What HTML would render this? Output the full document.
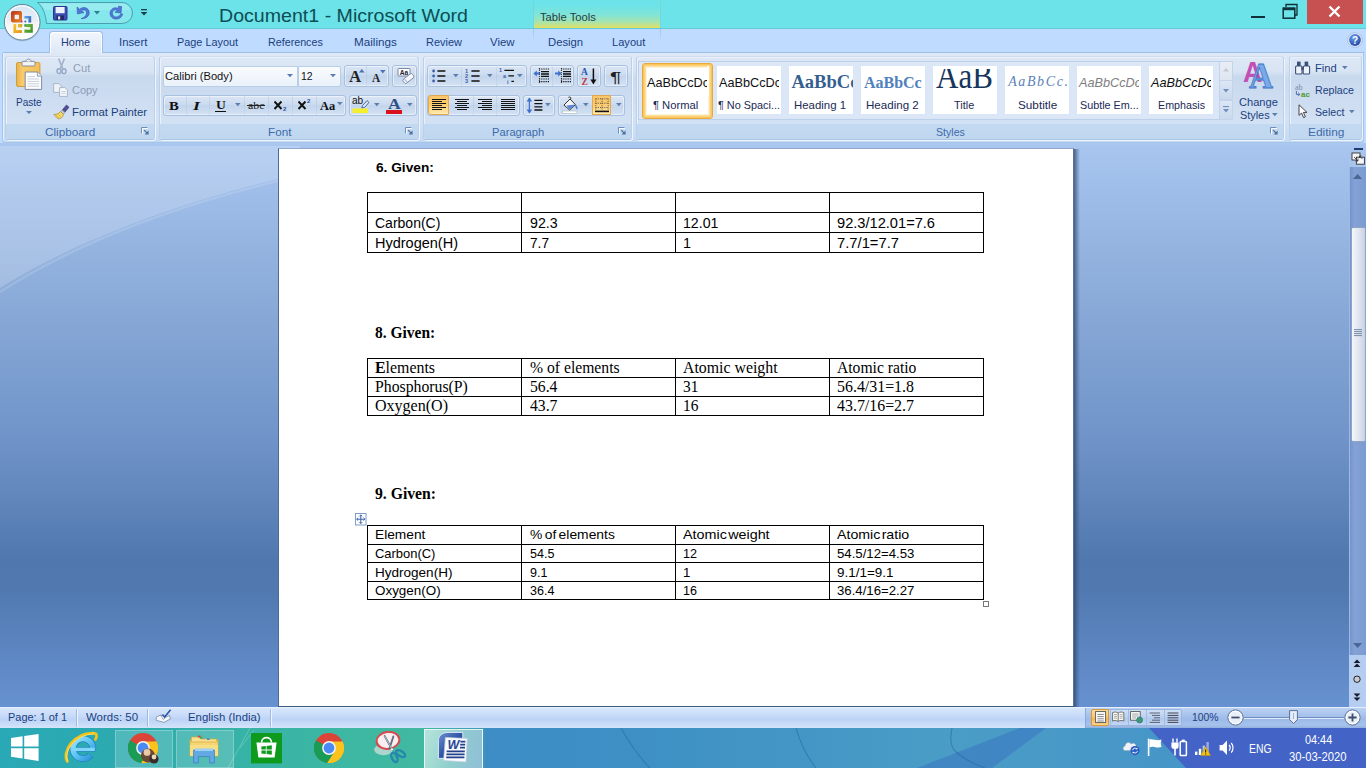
<!DOCTYPE html>
<html><head><meta charset='utf-8'><title>Document1 - Microsoft Word</title>
<style>
html,body{margin:0;padding:0}
body{width:1366px;height:768px;overflow:hidden;position:relative;background:#bfdbff;font-family:'Liberation Sans',sans-serif}
div,span.t,svg{position:absolute;box-sizing:border-box}
span.t{white-space:nowrap;transform-origin:0 50%;display:block}

</style></head>
<body>
<!-- title bar -->
<div style="left:0px;top:0px;width:1366px;height:29px;background:#6ce3e8;border-bottom:1px solid #62c9d6"></div>
<div style="left:533px;top:0px;width:128px;height:28px;background:linear-gradient(#6ce3e8 18%,#80e4d8 52%,#a6e4ae 78%,#cfe27c 93%,#e6de60 100%);border-left:1px solid #74d6dc;border-right:1px solid #74d6dc"></div>
<span class="t" style="left:540.3px;top:10.2px;font:normal normal 11px 'Liberation Sans',sans-serif;line-height:14px;color:#1e3e4a;transform:scaleX(1.0176);">Table Tools</span>
<span class="t" style="left:219.0px;top:3.7px;font:normal normal 18.2px 'Liberation Sans',sans-serif;line-height:24px;color:#0d4d55;transform:scaleX(1.0774);">Document1 - Microsoft Word</span>
<div style="left:1307px;top:0px;width:56px;height:23.5px;background:#c75050"></div>
<svg style="left:1328px;top:5px" width="13" height="13" viewBox="0 0 13 13"><path d="M1.5 1.5 L11.5 11.5 M11.5 1.5 L1.5 11.5" stroke="#fff" stroke-width="2.4" fill="none"/></svg>
<svg style="left:1282px;top:3px" width="17" height="17" viewBox="0 0 17 17"><path d="M4 4 V1.5 H15 V12 H13" stroke="#10303a" stroke-width="1.3" fill="none"/><rect x="1.2" y="5.2" width="11.6" height="10" fill="none" stroke="#10303a" stroke-width="1.5"/><rect x="1" y="4.6" width="12" height="2.6" fill="#10303a"/></svg>
<div style="left:1251px;top:16px;width:14px;height:2.4px;background:#10303a"></div>
<svg style="left:36px;top:0px" width="100" height="28" viewBox="0 0 100 28"><path d="M1.5 2.5 H86 A10.5 10.5 0 0 1 86 23.5 H10.5 C9.6 15 7.4 7.4 1.5 2.5 Z" fill="#86e7ec" stroke="#4c9fae" stroke-width="1"/><path d="M5 3.6 H86 A9.5 9.5 0 0 1 94.6 10 H9.4 Z" fill="#a8eef3" opacity=".55"/></svg>
<svg style="left:53px;top:6px" width="15" height="15" viewBox="0 0 15 15"><rect x=".5" y=".5" width="13.5" height="13.5" rx="1" fill="#3d4fb3" stroke="#2a3590"/><rect x="2.6" y="1" width="9" height="6.2" fill="#eef2ff"/><rect x="3.6" y="9.5" width="7.4" height="4.5" fill="#222a66"/><rect x="5" y="10.4" width="2.2" height="3" fill="#dfe4ff"/></svg>
<svg style="left:75px;top:5px" width="16" height="16" viewBox="0 0 16 16"><path d="M2 2 L2.5 9 L9 7.5 L6.4 6 C9 3.6 12.4 5.4 11.4 9 C10.8 11.4 8.6 13 6 13.6 C10.6 14 14.4 11.4 14.2 7.4 C14 3 8.6 0.8 4.6 4.2 Z" fill="#5078d6" stroke="#3558b4" stroke-width=".6"/></svg>
<svg style="left:94px;top:11px" width="7" height="5" viewBox="0 0 7 5"><path d="M0 0 H6 L3 3.4 Z" fill="#2d7e8e"/></svg>
<svg style="left:108px;top:5px" width="16" height="16" viewBox="0 0 16 16"><path d="M10.6 1.2 L13.6 1.6 L13 8 L7 7.2 L9.4 5.4 C6.6 3.6 3.6 6.4 4.6 9.4 C5.4 11.8 8 12.6 10.2 11.4 C12 10.6 12.6 9.4 12.8 8.6 L14.6 9 C14 12.4 10.6 14.6 7 14 C3.4 13.4 1.4 10.2 2.2 7 C3 3.6 7 1.6 10 3.4 Z" fill="#5078d6" stroke="#3558b4" stroke-width=".6"/></svg>
<svg style="left:140px;top:8px" width="9" height="9" viewBox="0 0 9 9"><rect x="1" y="1" width="6" height="1.3" fill="#1d3f50"/><path d="M0.6 4 H7.4 L4 7.6 Z" fill="#1d3f50"/></svg>
<!-- tab row -->
<div style="left:0px;top:29px;width:1366px;height:24px;background:#bfdbff"></div>
<div style="left:533px;top:29px;width:1px;height:12px;background:linear-gradient(#9fc4e8,#bfdbff)"></div>
<div style="left:660px;top:29px;width:1px;height:12px;background:linear-gradient(#9fc4e8,#bfdbff)"></div>
<div style="left:3px;top:52px;width:1361px;height:1px;background:#9fbee6"></div>
<div style="left:48.5px;top:30.5px;width:54px;height:25px;background:linear-gradient(#f2f6fc,#e3ecf8 60%,#dde8f6);border:1px solid #9ebde6;border-bottom:none;border-radius:4px 4px 0 0;box-shadow:inset 1px 1px 0 #fff,inset -1px 0 0 #fff"></div>
<span class="t" style="left:60.6px;top:35.0px;font:normal normal 11px 'Liberation Sans',sans-serif;line-height:14px;color:#1a3f80;transform:scaleX(0.9883);">Home</span>
<span class="t" style="left:118.5px;top:35.0px;font:normal normal 11px 'Liberation Sans',sans-serif;line-height:14px;color:#1a3f80;transform:scaleX(1.0287);">Insert</span>
<span class="t" style="left:177.4px;top:35.0px;font:normal normal 11px 'Liberation Sans',sans-serif;line-height:14px;color:#1a3f80;transform:scaleX(0.9875);">Page Layout</span>
<span class="t" style="left:268.4px;top:35.0px;font:normal normal 11px 'Liberation Sans',sans-serif;line-height:14px;color:#1a3f80;transform:scaleX(0.9742);">References</span>
<span class="t" style="left:353.5px;top:35.0px;font:normal normal 11px 'Liberation Sans',sans-serif;line-height:14px;color:#1a3f80;transform:scaleX(1.0608);">Mailings</span>
<span class="t" style="left:426.3px;top:35.0px;font:normal normal 11px 'Liberation Sans',sans-serif;line-height:14px;color:#1a3f80;transform:scaleX(0.9954);">Review</span>
<span class="t" style="left:490.3px;top:35.0px;font:normal normal 11px 'Liberation Sans',sans-serif;line-height:14px;color:#1a3f80;transform:scaleX(1.0405);">View</span>
<span class="t" style="left:547.6px;top:35.0px;font:normal normal 11px 'Liberation Sans',sans-serif;line-height:14px;color:#1a3f80;transform:scaleX(1.0251);">Design</span>
<span class="t" style="left:612.4px;top:35.0px;font:normal normal 11px 'Liberation Sans',sans-serif;line-height:14px;color:#1a3f80;transform:scaleX(1.0083);">Layout</span>
<svg style="left:1347px;top:32px" width="16" height="16" viewBox="0 0 16 16"><defs><radialGradient id="hg" cx=".4" cy=".3" r=".8"><stop offset="0" stop-color="#6aa0f0"/><stop offset="1" stop-color="#1c3f9c"/></radialGradient></defs><circle cx="8" cy="8" r="7.3" fill="#e8f0fc" stroke="#9db8e0" stroke-width=".8"/><circle cx="8" cy="8" r="5.9" fill="url(#hg)"/><text x="8" y="11.6" font-family="Liberation Sans,sans-serif" font-weight="bold" font-size="10" fill="#fff" text-anchor="middle">?</text></svg>
<svg style="left:2px;top:2px" width="42" height="42" viewBox="0 0 42 42"><defs><linearGradient id="ob" x1="0" y1="0" x2="0" y2="1"><stop offset="0" stop-color="#d4e6f6"/><stop offset=".45" stop-color="#e9eef6"/><stop offset=".55" stop-color="#f4f5f8"/><stop offset="1" stop-color="#ffffff"/></linearGradient>
<linearGradient id="o1" x1="0" y1="0" x2="1" y2="1"><stop offset="0" stop-color="#b8321a"/><stop offset="1" stop-color="#ef8a24"/></linearGradient>
<linearGradient id="o2" x1="0" y1="0" x2="1" y2="1"><stop offset="0" stop-color="#f6c83a"/><stop offset="1" stop-color="#e6920e"/></linearGradient>
<linearGradient id="o3" x1="0" y1="0" x2="1" y2="1"><stop offset="0" stop-color="#7cc04a"/><stop offset="1" stop-color="#3a8a22"/></linearGradient>
<linearGradient id="o4" x1="0" y1="0" x2="1" y2="1"><stop offset="0" stop-color="#6aaae6"/><stop offset="1" stop-color="#2a62b4"/></linearGradient></defs>
<circle cx="20.2" cy="20.8" r="18.6" fill="#7a8fa8" opacity=".35"/>
<circle cx="20.2" cy="20.2" r="17.8" fill="url(#ob)" stroke="#5f8894" stroke-width="1"/>
<circle cx="20.2" cy="20.2" r="16.4" fill="none" stroke="#fff" stroke-width="1.2" opacity=".75"/>
<rect x="9" y="9" width="11" height="11.6" rx="2" fill="url(#o1)"/><rect x="12.6" y="12.8" width="4.4" height="4.4" rx=".6" fill="#eef0f4"/>
<path d="M22.4 14 H29.2 V20.5 H26.4 V16.6 H22.4 Z" fill="url(#o4)"/>
<path d="M11.4 22 H14.2 V28 H19.9 V31 H11.4 Z M16 22 H19.9 V25.6 H16 Z" fill="url(#o2)"/><rect x="14.4" y="25.6" width="3.4" height="2.6" fill="#fbf6e4"/>
<path d="M22.4 22 H30.8 V30.8 H22.4 V27.6 H26 V25 H22.4 Z" fill="url(#o3)"/><rect x="25.4" y="25" width="3" height="2.8" fill="#e6f3d6"/>
<circle cx="19.6" cy="19.6" r="1" fill="#b0406a"/><circle cx="23.3" cy="19.6" r="1" fill="#3d6fc0"/><circle cx="19.6" cy="23.3" r="1" fill="#b9b92c"/><circle cx="23.3" cy="23.3" r="1" fill="#3f9a9a"/></svg>
<!-- ribbon -->
<div style="left:2px;top:53px;width:1362px;height:89.5px;background:linear-gradient(#dfe9f6 0,#d6e3f4 20%,#cbdaef 30%,#d3e2f5 75%,#c4daf3 100%);border:1px solid #a6c5ea;border-top:none;border-radius:0 0 4px 4px;box-shadow:0 1px 0 #afcbef, inset 1px 0 0 #e8f1fb"></div>
<div style="left:0px;top:143px;width:1366px;height:3px;background:linear-gradient(#aec9ee,#a7c5ef)"></div>
<div style="left:4.5px;top:55.5px;width:150.0px;height:84.5px;background:linear-gradient(#dde7f5 0,#d9e5f4 17%,#c8d9ee 24%,#cddcf0 50%,#d6e4f6 100%);border:1px solid #bdd0e9;border-top-color:#cfdcee;border-bottom-color:#aac4e4;border-radius:3px;box-shadow:1px 1px 0 #eef4fc, inset 1px 1px 0 #eaf1fa"></div>
<div style="left:5.5px;top:124px;width:148.0px;height:15px;background:linear-gradient(#c2d9f1,#c0d8ef);border-radius:0 0 2px 2px"></div>
<svg style="left:140.5px;top:126.5px" width="9" height="9" viewBox="0 0 9 9"><path d="M.5 6.4 V.5 H6.4" fill="none" stroke="#6f8db8" stroke-width="1"/><path d="M1.5 7 V1.5 H7" fill="none" stroke="#fff" stroke-width="1" opacity=".9"/><path d="M3.2 3.2 L6 6" stroke="#4f6f9e" stroke-width="1.2"/><path d="M7.6 3.6 V7.6 H3.6 Z" fill="#4f6f9e"/></svg>
<div style="left:158.5px;top:55.5px;width:260.5px;height:84.5px;background:linear-gradient(#dde7f5 0,#d9e5f4 17%,#c8d9ee 24%,#cddcf0 50%,#d6e4f6 100%);border:1px solid #bdd0e9;border-top-color:#cfdcee;border-bottom-color:#aac4e4;border-radius:3px;box-shadow:1px 1px 0 #eef4fc, inset 1px 1px 0 #eaf1fa"></div>
<div style="left:159.5px;top:124px;width:258.5px;height:15px;background:linear-gradient(#c2d9f1,#c0d8ef);border-radius:0 0 2px 2px"></div>
<svg style="left:405px;top:126.5px" width="9" height="9" viewBox="0 0 9 9"><path d="M.5 6.4 V.5 H6.4" fill="none" stroke="#6f8db8" stroke-width="1"/><path d="M1.5 7 V1.5 H7" fill="none" stroke="#fff" stroke-width="1" opacity=".9"/><path d="M3.2 3.2 L6 6" stroke="#4f6f9e" stroke-width="1.2"/><path d="M7.6 3.6 V7.6 H3.6 Z" fill="#4f6f9e"/></svg>
<div style="left:423px;top:55.5px;width:208.5px;height:84.5px;background:linear-gradient(#dde7f5 0,#d9e5f4 17%,#c8d9ee 24%,#cddcf0 50%,#d6e4f6 100%);border:1px solid #bdd0e9;border-top-color:#cfdcee;border-bottom-color:#aac4e4;border-radius:3px;box-shadow:1px 1px 0 #eef4fc, inset 1px 1px 0 #eaf1fa"></div>
<div style="left:424px;top:124px;width:206.5px;height:15px;background:linear-gradient(#c2d9f1,#c0d8ef);border-radius:0 0 2px 2px"></div>
<svg style="left:617.5px;top:126.5px" width="9" height="9" viewBox="0 0 9 9"><path d="M.5 6.4 V.5 H6.4" fill="none" stroke="#6f8db8" stroke-width="1"/><path d="M1.5 7 V1.5 H7" fill="none" stroke="#fff" stroke-width="1" opacity=".9"/><path d="M3.2 3.2 L6 6" stroke="#4f6f9e" stroke-width="1.2"/><path d="M7.6 3.6 V7.6 H3.6 Z" fill="#4f6f9e"/></svg>
<div style="left:635.5px;top:55.5px;width:648.5px;height:84.5px;background:linear-gradient(#dde7f5 0,#d9e5f4 17%,#c8d9ee 24%,#cddcf0 50%,#d6e4f6 100%);border:1px solid #bdd0e9;border-top-color:#cfdcee;border-bottom-color:#aac4e4;border-radius:3px;box-shadow:1px 1px 0 #eef4fc, inset 1px 1px 0 #eaf1fa"></div>
<div style="left:636.5px;top:124px;width:646.5px;height:15px;background:linear-gradient(#c2d9f1,#c0d8ef);border-radius:0 0 2px 2px"></div>
<svg style="left:1270px;top:126.5px" width="9" height="9" viewBox="0 0 9 9"><path d="M.5 6.4 V.5 H6.4" fill="none" stroke="#6f8db8" stroke-width="1"/><path d="M1.5 7 V1.5 H7" fill="none" stroke="#fff" stroke-width="1" opacity=".9"/><path d="M3.2 3.2 L6 6" stroke="#4f6f9e" stroke-width="1.2"/><path d="M7.6 3.6 V7.6 H3.6 Z" fill="#4f6f9e"/></svg>
<div style="left:1288.5px;top:55.5px;width:73.0px;height:84.5px;background:linear-gradient(#dde7f5 0,#d9e5f4 17%,#c8d9ee 24%,#cddcf0 50%,#d6e4f6 100%);border:1px solid #bdd0e9;border-top-color:#cfdcee;border-bottom-color:#aac4e4;border-radius:3px;box-shadow:1px 1px 0 #eef4fc, inset 1px 1px 0 #eaf1fa"></div>
<div style="left:1289.5px;top:124px;width:71.0px;height:15px;background:linear-gradient(#c2d9f1,#c0d8ef);border-radius:0 0 2px 2px"></div>
<span class="t" style="left:45.4px;top:124.7px;font:normal normal 11px 'Liberation Sans',sans-serif;line-height:14px;color:#3e6aaa;transform:scaleX(1.0662);">Clipboard</span>
<span class="t" style="left:268.2px;top:124.7px;font:normal normal 11px 'Liberation Sans',sans-serif;line-height:14px;color:#3e6aaa;transform:scaleX(1.0631);">Font</span>
<span class="t" style="left:492.4px;top:124.7px;font:normal normal 11px 'Liberation Sans',sans-serif;line-height:14px;color:#3e6aaa;transform:scaleX(1.0162);">Paragraph</span>
<span class="t" style="left:935.8px;top:124.7px;font:normal normal 11px 'Liberation Sans',sans-serif;line-height:14px;color:#3e6aaa;transform:scaleX(0.9615);">Styles</span>
<span class="t" style="left:1307.6px;top:124.7px;font:normal normal 11px 'Liberation Sans',sans-serif;line-height:14px;color:#3e6aaa;transform:scaleX(1.0822);">Editing</span>
<svg style="left:15px;top:58px" width="32" height="34" viewBox="0 0 32 34"><defs><linearGradient id="cbg" x1="0" y1="0" x2="1" y2="0"><stop offset="0" stop-color="#e9b24a"/><stop offset=".25" stop-color="#f8cc6c"/><stop offset="1" stop-color="#f3bf58"/></linearGradient></defs>
<rect x="1.5" y="4.5" width="23.4" height="24" rx="1.5" fill="url(#cbg)" stroke="#d19c3a"/>
<rect x="7" y="3.4" width="13" height="4.6" rx=".8" fill="#f1f3f7" stroke="#7f8792" stroke-width=".9"/><path d="M11 3.4 C11 .4 16 .4 16 3.4" fill="#f1f3f7" stroke="#7f8792" stroke-width=".9"/>
<path d="M10.2 14 H22.4 L26.6 18.2 V31.4 H10.2 Z" fill="#fdfdfe" stroke="#7e8da6"/><path d="M22.4 14 V18.2 H26.6" fill="#e4eaf3" stroke="#7e8da6" stroke-width=".8"/>
<path d="M12.6 18.6 H20 M12.6 21 H24.2 M12.6 23.4 H24.2 M12.6 25.8 H24.2 M12.6 28.2 H24.2" stroke="#c3cbd8" stroke-width=".9"/></svg>
<span class="t" style="left:16.0px;top:94.8px;font:normal normal 11px 'Liberation Sans',sans-serif;line-height:14px;color:#1a3f80;transform:scaleX(0.9137);">Paste</span>
<svg style="left:25.5px;top:111px" width="7" height="5" viewBox="0 0 7 5"><path d="M0 0 H6 L3 3 Z" fill="#5a7fae"/></svg>
<svg style="left:55.5px;top:58px" width="11" height="17" viewBox="0 0 11 17"><path d="M2.6 .6 L6.6 10.4 M8.4 .6 L4.4 10.4" stroke="#a3b1c8" stroke-width="1.5" fill="none"/><ellipse cx="3" cy="13.2" rx="2" ry="2.4" fill="none" stroke="#95a8c8" stroke-width="1.4"/><ellipse cx="8" cy="13.2" rx="2" ry="2.4" fill="none" stroke="#95a8c8" stroke-width="1.4"/></svg>
<span class="t" style="left:72.6px;top:60.8px;font:normal normal 11px 'Liberation Sans',sans-serif;line-height:14px;color:#8d9db5;transform:scaleX(1.0048);">Cut</span>
<svg style="left:53px;top:83px" width="16" height="14" viewBox="0 0 16 14"><path d="M.6 .6 H6 L8.4 3 V9.4 H.6 Z" fill="#eef2f8" stroke="#a3b1c6" stroke-width=".9"/><path d="M6.6 4.6 H12 L14.4 7 V13.4 H6.6 Z" fill="#f6f8fb" stroke="#a3b1c6" stroke-width=".9"/><path d="M8.4 8.5 H12.6 M8.4 10.4 H12.6" stroke="#b9c4d4" stroke-width=".8"/></svg>
<span class="t" style="left:72.2px;top:83.0px;font:normal normal 11px 'Liberation Sans',sans-serif;line-height:14px;color:#8d9db5;transform:scaleX(0.9969);">Copy</span>
<svg style="left:53px;top:104px" width="17" height="16" viewBox="0 0 17 16"><path d="M13.4 1 L16 3.2 L11.6 8.6 L9 6.4 Z" fill="#4f4f96" stroke="#34346c" stroke-width=".6"/><path d="M9.2 6 L12 8.4 L10.4 10.2 L7.6 7.8 Z" fill="#c9cbd8" stroke="#7f8298" stroke-width=".5"/><path d="M7.4 7.6 L10.6 10.4 C10 13 7.6 15.2 5 14.8 L.8 10.4 C3.4 10.6 5.8 9.6 7.4 7.6 Z" fill="#f3d968" stroke="#a8882c" stroke-width=".7"/><path d="M3 11 L6 14 M5 10.2 L8 13" stroke="#c9a83c" stroke-width=".6"/></svg>
<span class="t" style="left:72.2px;top:105.2px;font:normal normal 11px 'Liberation Sans',sans-serif;line-height:14px;color:#1a3f80;transform:scaleX(1.0310);">Format Painter</span>
<div style="left:162.5px;top:66px;width:135.5px;height:20.5px;background:linear-gradient(#fafcfe,#eaf1fa);border:1px solid #b8cde8;border-radius:2px 0 0 2px"></div>
<div style="left:297.5px;top:66px;width:43.5px;height:20.5px;background:linear-gradient(#fafcfe,#eaf1fa);border:1px solid #b8cde8;border-radius:0 2px 2px 0"></div>
<span class="t" style="left:165.4px;top:68.8px;font:normal normal 11px 'Liberation Sans',sans-serif;line-height:14px;color:#111;transform:scaleX(1.0146);">Calibri (Body)</span>
<span class="t" style="left:301.4px;top:68.8px;font:normal normal 11px 'Liberation Sans',sans-serif;line-height:14px;color:#111;transform:scaleX(0.9481);">12</span>
<svg style="left:287px;top:74px" width="7" height="5" viewBox="0 0 7 5"><path d="M0 0 H6 L3 3.2 Z" fill="#5a7fae"/></svg>
<svg style="left:330px;top:74px" width="7" height="5" viewBox="0 0 7 5"><path d="M0 0 H6 L3 3.2 Z" fill="#5a7fae"/></svg>
<div style="left:344px;top:65px;width:44.5px;height:21.5px;background:linear-gradient(#dbe6f5,#cbdbef 45%,#c3d5ec 50%,#d3e1f3);border:1px solid #a9c1e0;border-radius:3px;box-shadow:inset 0 0 0 1px rgba(255,255,255,.45);"></div>
<div style="left:392px;top:65px;width:24.5px;height:21.5px;background:linear-gradient(#dbe6f5,#cbdbef 45%,#c3d5ec 50%,#d3e1f3);border:1px solid #a9c1e0;border-radius:3px;box-shadow:inset 0 0 0 1px rgba(255,255,255,.45);"></div>
<div style="left:366px;top:66px;width:1px;height:19.5px;background:linear-gradient(#cbdaee,#b9cde8,#cbdaee)"></div>
<span class="t" style="left:348.6px;top:65.9px;font:normal bold 17px 'Liberation Serif',serif;line-height:22px;color:#222;transform:scaleX(0.9937);">A</span>
<svg style="left:358.5px;top:69px" width="6" height="4" viewBox="0 0 6 4"><path d="M0 3.4 L2.8 0 L5.6 3.4 Z" fill="#4d73b8"/></svg>
<span class="t" style="left:372.2px;top:70.2px;font:normal bold 12.5px 'Liberation Serif',serif;line-height:16px;color:#222;transform:scaleX(0.9084);">A</span>
<svg style="left:379.5px;top:69.5px" width="6" height="4" viewBox="0 0 6 4"><path d="M0 0 H5.6 L2.8 3.4 Z" fill="#4d73b8"/></svg>
<svg style="left:394.5px;top:66.5px" width="20" height="18" viewBox="0 0 20 18"><rect x="3" y="1.5" width="12" height="7.5" rx=".8" fill="#fdfdfe" stroke="#6f7f9c" stroke-width=".9"/><text x="9" y="7.8" font-family="Liberation Sans,sans-serif" font-size="6.6" font-weight="bold" fill="#1c2233" text-anchor="middle">Aa</text><rect x="7.6" y="9" width="11.6" height="5" rx="1.6" fill="#f6f8fc" stroke="#7b8aa6" stroke-width=".9" transform="rotate(-38 13.4 11.5)"/><path d="M9.6 12.2 L12 15" stroke="#b4bdcf" stroke-width="1.2"/></svg>
<div style="left:162.5px;top:94.5px;width:183.0px;height:21.0px;background:linear-gradient(#dbe6f5,#cbdbef 45%,#c3d5ec 50%,#d3e1f3);border:1px solid #a9c1e0;border-radius:3px;box-shadow:inset 0 0 0 1px rgba(255,255,255,.45);"></div>
<div style="left:349px;top:94.5px;width:67.5px;height:21.0px;background:linear-gradient(#dbe6f5,#cbdbef 45%,#c3d5ec 50%,#d3e1f3);border:1px solid #a9c1e0;border-radius:3px;box-shadow:inset 0 0 0 1px rgba(255,255,255,.45);"></div>
<div style="left:185.5px;top:95.5px;width:1px;height:19px;background:linear-gradient(#cbdaee,#b9cde8,#cbdaee)"></div>
<div style="left:208.5px;top:95.5px;width:1px;height:19px;background:linear-gradient(#cbdaee,#b9cde8,#cbdaee)"></div>
<div style="left:243.5px;top:95.5px;width:1px;height:19px;background:linear-gradient(#cbdaee,#b9cde8,#cbdaee)"></div>
<div style="left:267.5px;top:95.5px;width:1px;height:19px;background:linear-gradient(#cbdaee,#b9cde8,#cbdaee)"></div>
<div style="left:291.5px;top:95.5px;width:1px;height:19px;background:linear-gradient(#cbdaee,#b9cde8,#cbdaee)"></div>
<div style="left:315.5px;top:95.5px;width:1px;height:19px;background:linear-gradient(#cbdaee,#b9cde8,#cbdaee)"></div>
<span class="t" style="left:168.6px;top:96.8px;font:normal bold 13.5px 'Liberation Serif',serif;line-height:18px;color:#111;transform:scaleX(1.0884);">B</span>
<span class="t" style="left:193.0px;top:96.8px;font:italic bold 13.5px 'Liberation Serif',serif;line-height:18px;color:#111;transform:scaleX(1.3324);">I</span>
<span class="t" style="left:215.6px;top:97.4px;font:normal bold 12.5px 'Liberation Serif',serif;line-height:16px;color:#111;transform:scaleX(1.0856);">U</span>
<div style="left:215.4px;top:111.2px;width:10.2px;height:1.2px;background:#111"></div>
<svg style="left:234.5px;top:103px" width="7" height="5" viewBox="0 0 7 5"><path d="M0 0 H5.6 L2.8 3.2 Z" fill="#5a7fae"/></svg>
<span class="t" style="left:248.0px;top:99.1px;font:normal normal 10.5px 'Liberation Serif',serif;line-height:14px;color:#222;transform:scaleX(1.1255);">abc</span>
<div style="left:247.4px;top:105.4px;width:17.6px;height:1px;background:#222"></div>
<svg style="left:273px;top:99px" width="17" height="13" viewBox="0 0 17 13"><path d="M1.5 2.5 L8.5 10 M8.5 2.5 L1.5 10" stroke="#111" stroke-width="1.9" fill="none"/><text x="10" y="12.4" font-family="Liberation Sans,sans-serif" font-size="6" font-weight="bold" fill="#1f4da0">2</text></svg>
<svg style="left:297px;top:97px" width="17" height="15" viewBox="0 0 17 15"><path d="M1.5 4.5 L8.5 12 M8.5 4.5 L1.5 12" stroke="#111" stroke-width="1.9" fill="none"/><text x="10" y="6" font-family="Liberation Sans,sans-serif" font-size="6" font-weight="bold" fill="#1f4da0">2</text></svg>
<span class="t" style="left:319.8px;top:96.8px;font:normal bold 13.5px 'Liberation Serif',serif;line-height:18px;color:#111;transform:scaleX(0.9213);">Aa</span>
<svg style="left:336.5px;top:102px" width="7" height="5" viewBox="0 0 7 5"><path d="M0 0 H5.6 L2.8 3.2 Z" fill="#5a7fae"/></svg>
<svg style="left:352px;top:96px" width="20" height="19" viewBox="0 0 20 19"><text x="0" y="8.4" font-family="Liberation Sans,sans-serif" font-size="10" fill="#111">ab</text><path d="M10.5 9.6 L15 4.6 L17 6.4 L12.6 11.4 L9.8 12 Z" fill="#dfe6f3" stroke="#3b5a9a" stroke-width=".9"/><rect x=".5" y="12.5" width="15.5" height="4.6" fill="#f5ee2d"/></svg>
<svg style="left:373.5px;top:103px" width="7" height="5" viewBox="0 0 7 5"><path d="M0 0 H5.6 L2.8 3.2 Z" fill="#5a7fae"/></svg>
<span class="t" style="left:387.6px;top:94.3px;font:normal bold 15px 'Liberation Serif',serif;line-height:20px;color:#2f4f86;transform:scaleX(1.1816);">A</span>
<div style="left:386px;top:110px;width:16px;height:3.6px;background:#d8121c"></div>
<svg style="left:406.5px;top:103px" width="7" height="5" viewBox="0 0 7 5"><path d="M0 0 H5.6 L2.8 3.2 Z" fill="#5a7fae"/></svg>
<div style="left:427px;top:65px;width:99.5px;height:22px;background:linear-gradient(#dbe6f5,#cbdbef 45%,#c3d5ec 50%,#d3e1f3);border:1px solid #a9c1e0;border-radius:3px;box-shadow:inset 0 0 0 1px rgba(255,255,255,.45);"></div>
<div style="left:529.5px;top:65px;width:44.0px;height:22px;background:linear-gradient(#dbe6f5,#cbdbef 45%,#c3d5ec 50%,#d3e1f3);border:1px solid #a9c1e0;border-radius:3px;box-shadow:inset 0 0 0 1px rgba(255,255,255,.45);"></div>
<div style="left:577px;top:65px;width:23.5px;height:22px;background:linear-gradient(#dbe6f5,#cbdbef 45%,#c3d5ec 50%,#d3e1f3);border:1px solid #a9c1e0;border-radius:3px;box-shadow:inset 0 0 0 1px rgba(255,255,255,.45);"></div>
<div style="left:604px;top:65px;width:24px;height:22px;background:linear-gradient(#dbe6f5,#cbdbef 45%,#c3d5ec 50%,#d3e1f3);border:1px solid #a9c1e0;border-radius:3px;box-shadow:inset 0 0 0 1px rgba(255,255,255,.45);"></div>
<div style="left:461px;top:66.5px;width:1px;height:19.5px;background:linear-gradient(#cbdaee,#b9cde8,#cbdaee)"></div>
<div style="left:495.5px;top:66.5px;width:1px;height:19.5px;background:linear-gradient(#cbdaee,#b9cde8,#cbdaee)"></div>
<div style="left:551.5px;top:66.5px;width:1px;height:19.5px;background:linear-gradient(#cbdaee,#b9cde8,#cbdaee)"></div>
<svg style="left:431px;top:68px" width="20" height="16" viewBox="0 0 20 16"><circle cx="2.6" cy="3" r="1.4" fill="#3a5fae"/><circle cx="2.6" cy="8" r="1.4" fill="#3a5fae"/><circle cx="2.6" cy="13" r="1.4" fill="#3a5fae"/><path d="M6.4 3 H14.4 M6.4 8 H14.4 M6.4 13 H14.4" stroke="#111" stroke-width="1.3"/></svg>
<svg style="left:452.5px;top:74px" width="7" height="5" viewBox="0 0 7 5"><path d="M0 0 H5.6 L2.8 3.2 Z" fill="#5a7fae"/></svg>
<svg style="left:465px;top:67px" width="20" height="18" viewBox="0 0 20 18"><text x="0" y="5.6" font-family="Liberation Sans,sans-serif" font-size="5.6" font-weight="bold" fill="#3a5fae">1</text><text x="0" y="11" font-family="Liberation Sans,sans-serif" font-size="5.6" font-weight="bold" fill="#3a5fae">2</text><text x="0" y="16.4" font-family="Liberation Sans,sans-serif" font-size="5.6" font-weight="bold" fill="#3a5fae">3</text><path d="M6.4 4 H14.6 M6.4 9 H14.6 M6.4 14 H14.6" stroke="#111" stroke-width="1.3"/></svg>
<svg style="left:487px;top:74px" width="7" height="5" viewBox="0 0 7 5"><path d="M0 0 H5.6 L2.8 3.2 Z" fill="#5a7fae"/></svg>
<svg style="left:499px;top:67px" width="20" height="19" viewBox="0 0 20 19"><text x="0" y="5.4" font-family="Liberation Sans,sans-serif" font-size="5.4" font-weight="bold" fill="#3a5fae">1</text><text x="4" y="11" font-family="Liberation Sans,sans-serif" font-size="5.4" font-weight="bold" fill="#3a5fae">a</text><text x="8" y="17" font-family="Liberation Sans,sans-serif" font-size="5.4" font-weight="bold" fill="#3a5fae">i</text><path d="M5.4 3.4 H15 M9.4 8.8 H15 M12.4 14.4 H15" stroke="#111" stroke-width="1.3"/></svg>
<svg style="left:517px;top:74px" width="7" height="5" viewBox="0 0 7 5"><path d="M0 0 H5.6 L2.8 3.2 Z" fill="#5a7fae"/></svg>
<svg style="left:532.5px;top:68px" width="18" height="16" viewBox="0 0 18 16"><path d="M0.4 5.6 L3.8 2.6 V4.6 H7 V6.6 H3.8 V8.6 Z" fill="#3f6fd0"/><path d="M6 1 H16" stroke="#111" stroke-width="1.1" stroke-dasharray="1.2 1"/><path d="M8 3.6 H16 M8 6 H16 M8 8.4 H16" stroke="#111" stroke-width="1.4"/><path d="M6 11 H16 M6 13.6 H16" stroke="#111" stroke-width="1.1" stroke-dasharray="1.2 1"/><path d="M6.4 0 V15" stroke="#111" stroke-width=".8" stroke-dasharray="1 1"/></svg>
<svg style="left:554.5px;top:68px" width="18" height="16" viewBox="0 0 18 16"><path d="M6.6 5.6 L3.2 2.6 V4.6 H0 V6.6 H3.2 V8.6 Z" fill="#3f6fd0"/><path d="M6 1 H16" stroke="#111" stroke-width="1.1" stroke-dasharray="1.2 1"/><path d="M8 3.6 H16 M8 6 H16 M8 8.4 H16" stroke="#111" stroke-width="1.4"/><path d="M6 11 H16 M6 13.6 H16" stroke="#111" stroke-width="1.1" stroke-dasharray="1.2 1"/><path d="M6.4 0 V15" stroke="#111" stroke-width=".8" stroke-dasharray="1 1"/></svg>
<svg style="left:580px;top:66.5px" width="20" height="20" viewBox="0 0 20 20"><text x="1" y="8.4" font-family="Liberation Serif,serif" font-size="9.5" font-weight="bold" fill="#2a55b0">A</text><text x="1.4" y="17.6" font-family="Liberation Serif,serif" font-size="9.5" font-weight="bold" fill="#c23a46">Z</text><path d="M13.4 1.5 V14" stroke="#111" stroke-width="1.5"/><path d="M10.4 12.6 H16.4 L13.4 17.4 Z" fill="#111"/></svg>
<span class="t" style="left:609.6px;top:66.6px;font:normal normal 15.5px 'Liberation Sans',sans-serif;line-height:20px;color:#222;transform:scaleX(1.3693);">¶</span>
<div style="left:427px;top:94.5px;width:92.5px;height:21.0px;background:linear-gradient(#dbe6f5,#cbdbef 45%,#c3d5ec 50%,#d3e1f3);border:1px solid #a9c1e0;border-radius:3px;box-shadow:inset 0 0 0 1px rgba(255,255,255,.45);"></div>
<div style="left:523px;top:94.5px;width:31.5px;height:21.0px;background:linear-gradient(#dbe6f5,#cbdbef 45%,#c3d5ec 50%,#d3e1f3);border:1px solid #a9c1e0;border-radius:3px;box-shadow:inset 0 0 0 1px rgba(255,255,255,.45);"></div>
<div style="left:558px;top:94.5px;width:67px;height:21.0px;background:linear-gradient(#dbe6f5,#cbdbef 45%,#c3d5ec 50%,#d3e1f3);border:1px solid #a9c1e0;border-radius:3px;box-shadow:inset 0 0 0 1px rgba(255,255,255,.45);"></div>
<div style="left:427.5px;top:95px;width:21.5px;height:20px;background:linear-gradient(#f9c66c 0,#fbc869 40%,#fcd584 68%,#feebb2 100%);border:1px solid #e4a94e;border-radius:3px 0 0 3px"></div>
<div style="left:472.5px;top:95.5px;width:1px;height:19px;background:linear-gradient(#cbdaee,#b9cde8,#cbdaee)"></div>
<div style="left:495.5px;top:95.5px;width:1px;height:19px;background:linear-gradient(#cbdaee,#b9cde8,#cbdaee)"></div>
<div style="left:596.5px;top:95.5px;width:1px;height:19px;background:linear-gradient(#cbdaee,#b9cde8,#cbdaee)"></div>
<div style="left:610px;top:95.5px;width:1px;height:19px;background:linear-gradient(#cbdaee,#b9cde8,#cbdaee)"></div>
<svg style="left:432px;top:99px" width="16" height="13" viewBox="0 0 16 13"><rect x="0" y="0" width="14" height="1" fill="#141414" shape-rendering="crispEdges"/><rect x="0" y="2" width="10" height="1" fill="#141414" shape-rendering="crispEdges"/><rect x="0" y="4" width="14" height="1" fill="#141414" shape-rendering="crispEdges"/><rect x="0" y="6" width="10" height="1" fill="#141414" shape-rendering="crispEdges"/><rect x="0" y="8" width="14" height="1" fill="#141414" shape-rendering="crispEdges"/><rect x="0" y="10" width="10" height="1" fill="#141414" shape-rendering="crispEdges"/></svg>
<svg style="left:455px;top:99px" width="16" height="13" viewBox="0 0 16 13"><rect x="0" y="0" width="14" height="1" fill="#141414" shape-rendering="crispEdges"/><rect x="2" y="2" width="10" height="1" fill="#141414" shape-rendering="crispEdges"/><rect x="0" y="4" width="14" height="1" fill="#141414" shape-rendering="crispEdges"/><rect x="2" y="6" width="10" height="1" fill="#141414" shape-rendering="crispEdges"/><rect x="0" y="8" width="14" height="1" fill="#141414" shape-rendering="crispEdges"/><rect x="2" y="10" width="10" height="1" fill="#141414" shape-rendering="crispEdges"/></svg>
<svg style="left:478px;top:99px" width="16" height="13" viewBox="0 0 16 13"><rect x="0" y="0" width="14" height="1" fill="#141414" shape-rendering="crispEdges"/><rect x="4" y="2" width="10" height="1" fill="#141414" shape-rendering="crispEdges"/><rect x="0" y="4" width="14" height="1" fill="#141414" shape-rendering="crispEdges"/><rect x="4" y="6" width="10" height="1" fill="#141414" shape-rendering="crispEdges"/><rect x="0" y="8" width="14" height="1" fill="#141414" shape-rendering="crispEdges"/><rect x="4" y="10" width="10" height="1" fill="#141414" shape-rendering="crispEdges"/></svg>
<svg style="left:501px;top:99px" width="16" height="13" viewBox="0 0 16 13"><rect x="0" y="0" width="14" height="1" fill="#141414" shape-rendering="crispEdges"/><rect x="0" y="2" width="14" height="1" fill="#141414" shape-rendering="crispEdges"/><rect x="0" y="4" width="14" height="1" fill="#141414" shape-rendering="crispEdges"/><rect x="0" y="6" width="14" height="1" fill="#141414" shape-rendering="crispEdges"/><rect x="0" y="8" width="14" height="1" fill="#141414" shape-rendering="crispEdges"/><rect x="0" y="10" width="14" height="1" fill="#141414" shape-rendering="crispEdges"/></svg>
<svg style="left:526px;top:96.5px" width="20" height="18" viewBox="0 0 20 18"><path d="M3.4 1 V16" stroke="#3f6fd0" stroke-width="1.3"/><path d="M.6 4.4 L3.4 .6 L6.2 4.4 Z M.6 12.6 L3.4 16.4 L6.2 12.6 Z" fill="#3f6fd0"/><path d="M8.4 3.4 H16.4 M8.4 6.6 H16.4 M8.4 9.8 H16.4 M8.4 13 H16.4" stroke="#111" stroke-width="1.3"/></svg>
<svg style="left:545px;top:103px" width="7" height="5" viewBox="0 0 7 5"><path d="M0 0 H5.6 L2.8 3.2 Z" fill="#5a7fae"/></svg>
<svg style="left:561px;top:96px" width="18" height="18" viewBox="0 0 18 18"><path d="M7.4 1.4 C9 .2 10.6 1.6 9.6 3.4 L9.2 4.4" fill="none" stroke="#333" stroke-width="1"/><path d="M3 9 L9 3 L14.4 8.6 L8.6 14 Z" fill="#f4f6fa" stroke="#333" stroke-width="1"/><path d="M14.4 8.6 C16.4 10 16.8 12 16.2 13.6 C15 12.6 14 11 14.4 8.6 Z" fill="#3f6fd0"/><path d="M5.4 9.4 L14 8.6 L8.6 13.6 Z" fill="#5b87da"/><rect x="1.4" y="15" width="14.6" height="2.4" fill="#fff" stroke="#9aa" stroke-width=".5"/></svg>
<svg style="left:583px;top:103px" width="7" height="5" viewBox="0 0 7 5"><path d="M0 0 H5.6 L2.8 3.2 Z" fill="#5a7fae"/></svg>
<div style="left:592px;top:95px;width:19px;height:20px;background:linear-gradient(#f9c66c 0,#fbc869 40%,#fcd584 68%,#feebb2 100%);border:1px solid #e4a94e"></div>
<svg style="left:594.5px;top:98px" width="14" height="15" viewBox="0 0 14 15"><path d="M.6 .8 H13.4 M.6 5.2 H13.4 M.6 9.6 H13.4" stroke="#444" stroke-width=".9" stroke-dasharray="1 1.2"/><path d="M.8 .6 V12 M7 .6 V12 M13.2 .6 V12" stroke="#444" stroke-width=".9" stroke-dasharray="1 1.2"/><path d="M0 13.4 H14" stroke="#111" stroke-width="1.6"/></svg>
<svg style="left:615.5px;top:103px" width="7" height="5" viewBox="0 0 7 5"><path d="M0 0 H5.6 L2.8 3.2 Z" fill="#5a7fae"/></svg>
<div style="left:637.5px;top:60.5px;width:595.5px;height:59px;background:#dbe7f6;border:1px solid #bdd0ea;border-right:none"></div>
<div style="left:641.5px;top:62.5px;width:71px;height:56px;background:#fff;border:1px solid #e8a93c;border-radius:3px;box-shadow:inset 0 0 0 1.5px #fbc55c, inset 0 0 0 3px #fddf9c, inset 0 0 0 4px #fef3d8"></div>
<div style="left:717px;top:66px;width:64px;height:48px;background:#fff"></div>
<div style="left:789px;top:66px;width:64px;height:48px;background:#fff"></div>
<div style="left:861px;top:66px;width:64px;height:48px;background:#fff"></div>
<div style="left:933px;top:66px;width:64px;height:48px;background:#fff"></div>
<div style="left:1005px;top:66px;width:64px;height:48px;background:#fff"></div>
<div style="left:1077px;top:66px;width:64px;height:48px;background:#fff"></div>
<div style="left:1149px;top:66px;width:64px;height:48px;background:#fff"></div>
<div style="left:645px;top:66px;width:64px;height:48px;overflow:hidden"><span class="t" style="left:2.4px;top:7.7px;font:normal normal 13.4px 'Liberation Sans',sans-serif;line-height:17px;color:#111;transform:scaleX(0.9467);">AaBbCcDc</span><div style="left:61.6px;top:0px;width:2.4px;height:30px;background:#fff"></div><span class="t" style="left:8.4px;top:31.8px;font:normal normal 11px 'Liberation Sans',sans-serif;line-height:14px;color:#1a2a55;transform:scaleX(1.0177);">¶ Normal</span></div>
<div style="left:717px;top:66px;width:64px;height:48px;overflow:hidden"><span class="t" style="left:2.4px;top:7.7px;font:normal normal 13.4px 'Liberation Sans',sans-serif;line-height:17px;color:#111;transform:scaleX(0.9467);">AaBbCcDc</span><div style="left:61.6px;top:0px;width:2.4px;height:30px;background:#fff"></div><span class="t" style="left:0.6px;top:31.8px;font:normal normal 11px 'Liberation Sans',sans-serif;line-height:14px;color:#1a2a55;transform:scaleX(0.9878);">¶ No Spaci...</span></div>
<div style="left:789px;top:66px;width:64px;height:48px;overflow:hidden"><span class="t" style="left:2.4px;top:4.3px;font:normal bold 18.6px 'Liberation Serif',serif;line-height:24px;color:#365f91;">AaBbCc</span><span class="t" style="left:5.4px;top:31.8px;font:normal normal 11px 'Liberation Sans',sans-serif;line-height:14px;color:#1a2a55;transform:scaleX(1.0369);">Heading 1</span></div>
<div style="left:861px;top:66px;width:64px;height:48px;overflow:hidden"><span class="t" style="left:3.3px;top:5.6px;font:normal bold 16px 'Liberation Serif',serif;line-height:21px;color:#4f81bd;transform:scaleX(0.9986);">AaBbCc</span><span class="t" style="left:5.3px;top:31.8px;font:normal normal 11px 'Liberation Sans',sans-serif;line-height:14px;color:#1a2a55;transform:scaleX(1.0508);">Heading 2</span></div>
<div style="left:933px;top:66px;width:64px;height:48px;overflow:hidden"><span class="t" style="left:3.2px;top:-12.1px;font:normal normal 35px 'Liberation Serif',serif;line-height:46px;color:#17365d;transform:scaleX(0.8854);">AaB</span><div style="left:0px;top:0px;width:64px;height:2.5px;background:#fff"></div><span class="t" style="left:21.4px;top:31.8px;font:normal normal 11px 'Liberation Sans',sans-serif;line-height:14px;color:#1a2a55;transform:scaleX(0.9915);">Title</span></div>
<div style="left:1005px;top:66px;width:64px;height:48px;overflow:hidden"><span class="t" style="left:3.2px;top:7.3px;font:italic normal 14px 'Liberation Serif',serif;line-height:18px;color:#5b83b8;letter-spacing:1.6px;">AaBbCc.</span><span class="t" style="left:12.5px;top:31.8px;font:normal normal 11px 'Liberation Sans',sans-serif;line-height:14px;color:#1a2a55;transform:scaleX(1.0684);">Subtitle</span></div>
<div style="left:1077px;top:66px;width:64px;height:48px;overflow:hidden"><span class="t" style="left:2.4px;top:7.7px;font:italic normal 13.4px 'Liberation Sans',sans-serif;line-height:17px;color:#808080;transform:scaleX(0.9467);">AaBbCcDc</span><div style="left:61.6px;top:0px;width:2.4px;height:30px;background:#fff"></div><span class="t" style="left:2.6px;top:31.8px;font:normal normal 11px 'Liberation Sans',sans-serif;line-height:14px;color:#1a2a55;transform:scaleX(0.9814);">Subtle Em...</span></div>
<div style="left:1149px;top:66px;width:64px;height:48px;overflow:hidden"><span class="t" style="left:2.4px;top:7.7px;font:italic normal 13.4px 'Liberation Sans',sans-serif;line-height:17px;color:#111;transform:scaleX(0.9467);">AaBbCcDc</span><div style="left:61.6px;top:0px;width:2.4px;height:30px;background:#fff"></div><span class="t" style="left:8.6px;top:31.8px;font:normal normal 11px 'Liberation Sans',sans-serif;line-height:14px;color:#1a2a55;transform:scaleX(0.9731);">Emphasis</span></div>
<div style="left:1218.5px;top:60.5px;width:14px;height:20px;background:linear-gradient(#e9eef5,#dfe6f0);border:1px solid #c3d4ea"></div>
<div style="left:1218.5px;top:80px;width:14px;height:20px;background:linear-gradient(#dbe6f5,#cad9ee);border:1px solid #c3d4ea"></div>
<div style="left:1218.5px;top:99.5px;width:14px;height:20px;background:linear-gradient(#dbe6f5,#cad9ee);border:1px solid #c3d4ea"></div>
<svg style="left:1222.5px;top:68px" width="7" height="5" viewBox="0 0 7 5"><path d="M0 3.4 L3 0 L6 3.4 Z" fill="#c2c8d2"/></svg>
<svg style="left:1222.5px;top:88.5px" width="7" height="5" viewBox="0 0 7 5"><path d="M0 0 H6 L3 3.4 Z" fill="#6f8fbc"/></svg>
<svg style="left:1222.5px;top:105.5px" width="7" height="8" viewBox="0 0 7 8"><rect x="0" y="0" width="6" height="1.1" fill="#6f8fbc"/><path d="M0 3 H6 L3 6.4 Z" fill="#6f8fbc"/></svg>
<span class="t" style="left:1243.0px;top:53.4px;font:normal bold 29px 'Liberation Sans',sans-serif;line-height:38px;color:#c44fb4;transform:scaleX(0.9263);">A</span>
<span class="t" style="left:1249.0px;top:54.4px;font:normal bold 35px 'Liberation Serif',serif;line-height:46px;color:#78aaea;transform:scaleX(0.9495);-webkit-text-stroke:.8px #3f72c4;">A</span>
<span class="t" style="left:1238.6px;top:94.8px;font:normal normal 11px 'Liberation Sans',sans-serif;line-height:14px;color:#1a3f80;transform:scaleX(1.0069);">Change</span>
<span class="t" style="left:1240.0px;top:107.8px;font:normal normal 11px 'Liberation Sans',sans-serif;line-height:14px;color:#1a3f80;transform:scaleX(0.9882);">Styles</span>
<svg style="left:1271.5px;top:112.5px" width="7" height="5" viewBox="0 0 7 5"><path d="M0 0 H5.6 L2.8 3.2 Z" fill="#5a7fae"/></svg>
<svg style="left:1294.5px;top:60.5px" width="17" height="14" viewBox="0 0 17 14"><rect x="2" y=".6" width="3.6" height="5" fill="#3c4f7a"/><rect x="9.6" y=".6" width="3.6" height="5" fill="#3c4f7a"/><rect x=".6" y="5" width="6.4" height="8" rx="1" fill="#eef2fa" stroke="#3c4f7a" stroke-width="1.1"/><rect x="8.2" y="5" width="6.4" height="8" rx="1" fill="#eef2fa" stroke="#3c4f7a" stroke-width="1.1"/><rect x="6.4" y="6" width="2.4" height="3" fill="#3c4f7a"/></svg>
<span class="t" style="left:1314.6px;top:61.0px;font:normal normal 11px 'Liberation Sans',sans-serif;line-height:14px;color:#1a3f80;transform:scaleX(1.0188);">Find</span>
<svg style="left:1341.5px;top:65.5px" width="7" height="5" viewBox="0 0 7 5"><path d="M0 0 H5.6 L2.8 3.2 Z" fill="#5a7fae"/></svg>
<svg style="left:1295px;top:83px" width="17" height="15" viewBox="0 0 17 15"><text x="0" y="6.6" font-family="Liberation Serif,serif" font-size="8" fill="#7a8aa8">ab</text><text x="6" y="13.6" font-family="Liberation Sans,sans-serif" font-size="8" font-weight="bold" fill="#4d9a2a">ac</text><path d="M1.4 8 V11.4 H4.6 M3.2 9.8 L4.8 11.4 L3.2 13" fill="none" stroke="#4a6fb8" stroke-width="1"/></svg>
<span class="t" style="left:1314.6px;top:83.4px;font:normal normal 11px 'Liberation Sans',sans-serif;line-height:14px;color:#1a3f80;transform:scaleX(0.9663);">Replace</span>
<svg style="left:1298px;top:104px" width="11" height="15" viewBox="0 0 11 15"><path d="M1 .8 V11.4 L3.6 9 L5.6 13.6 L7.4 12.8 L5.4 8.4 H9 Z" fill="#fff" stroke="#333" stroke-width=".9"/></svg>
<span class="t" style="left:1314.6px;top:105.4px;font:normal normal 11px 'Liberation Sans',sans-serif;line-height:14px;color:#1a3f80;transform:scaleX(0.9617);">Select</span>
<svg style="left:1348.5px;top:110px" width="7" height="5" viewBox="0 0 7 5"><path d="M0 0 H5.6 L2.8 3.2 Z" fill="#5a7fae"/></svg>
<!-- document area -->
<div style="left:0px;top:146px;width:1366px;height:561px;background:linear-gradient(#a7c5ef 0,#8dadda 25%,#7094c9 52%,#5078ae 74%,#5179b0 79%,#6792d1 100%)"></div>
<svg style="left:0px;top:146px" width="300" height="160" viewBox="0 0 300 160"><path d="M0 0 H300 V28 C190 52 80 92 0 142 Z" fill="#fff" opacity=".2"/><path d="M300 30 C190 54 80 94 0 146" fill="none" stroke="#fff" stroke-width="2.5" opacity=".14"/></svg>
<div style="left:1073px;top:149px;width:7px;height:558px;background:linear-gradient(90deg,rgba(40,60,95,.85),rgba(50,75,115,.5) 45%,rgba(60,90,140,0))"></div>
<div style="left:278px;top:148px;width:796px;height:559px;background:#fff;border-left:1px solid #4f6a94;border-top:1px solid #93a9cc;border-right:1px solid #5a7198;border-bottom:1px solid #3d5a80"></div>
<span class="t" style="left:375.6px;top:158.9px;font:normal bold 13.4px 'Liberation Sans',sans-serif;line-height:17px;color:#000;transform:scaleX(1.0220);">6. Given:</span>
<span class="t" style="left:375.4px;top:321.7px;font:normal bold 16px 'Liberation Serif',serif;line-height:21px;color:#000;transform:scaleX(0.9676);">8. Given:</span>
<span class="t" style="left:375.0px;top:482.7px;font:normal bold 16px 'Liberation Serif',serif;line-height:21px;color:#000;transform:scaleX(0.9804);">9. Given:</span>
<div style="left:367px;top:192px;width:617px;height:1px;background:#000"></div><div style="left:367px;top:212px;width:617px;height:1px;background:#000"></div><div style="left:367px;top:232px;width:617px;height:1px;background:#000"></div><div style="left:367px;top:252px;width:617px;height:1px;background:#000"></div><div style="left:367px;top:192px;width:1px;height:61px;background:#000"></div><div style="left:521px;top:192px;width:1px;height:61px;background:#000"></div><div style="left:675px;top:192px;width:1px;height:61px;background:#000"></div><div style="left:829px;top:192px;width:1px;height:61px;background:#000"></div><div style="left:983px;top:192px;width:1px;height:61px;background:#000"></div>
<div style="left:367px;top:358px;width:617px;height:1px;background:#000"></div><div style="left:367px;top:377px;width:617px;height:1px;background:#000"></div><div style="left:367px;top:396px;width:617px;height:1px;background:#000"></div><div style="left:367px;top:415px;width:617px;height:1px;background:#000"></div><div style="left:367px;top:358px;width:1px;height:58px;background:#000"></div><div style="left:521px;top:358px;width:1px;height:58px;background:#000"></div><div style="left:675px;top:358px;width:1px;height:58px;background:#000"></div><div style="left:829px;top:358px;width:1px;height:58px;background:#000"></div><div style="left:983px;top:358px;width:1px;height:58px;background:#000"></div>
<div style="left:367px;top:525px;width:617px;height:1px;background:#000"></div><div style="left:367px;top:544px;width:617px;height:1px;background:#000"></div><div style="left:367px;top:562px;width:617px;height:1px;background:#000"></div><div style="left:367px;top:581px;width:617px;height:1px;background:#000"></div><div style="left:367px;top:599px;width:617px;height:1px;background:#000"></div><div style="left:367px;top:525px;width:1px;height:75px;background:#000"></div><div style="left:521px;top:525px;width:1px;height:75px;background:#000"></div><div style="left:675px;top:525px;width:1px;height:75px;background:#000"></div><div style="left:829px;top:525px;width:1px;height:75px;background:#000"></div><div style="left:983px;top:525px;width:1px;height:75px;background:#000"></div>
<span class="t" style="left:375.4px;top:213.9px;font:normal normal 14.4px 'Liberation Sans',sans-serif;line-height:19px;color:#000;transform:scaleX(0.9736);">Carbon(C)</span>
<span class="t" style="left:529.6px;top:213.9px;font:normal normal 14.4px 'Liberation Sans',sans-serif;line-height:19px;color:#000;transform:scaleX(0.9854);">92.3</span>
<span class="t" style="left:683.0px;top:213.9px;font:normal normal 14.4px 'Liberation Sans',sans-serif;line-height:19px;color:#000;transform:scaleX(0.9830);">12.01</span>
<span class="t" style="left:837.2px;top:213.9px;font:normal normal 14.4px 'Liberation Sans',sans-serif;line-height:19px;color:#000;transform:scaleX(1.0163);">92.3/12.01=7.6</span>
<span class="t" style="left:375.4px;top:233.9px;font:normal normal 14.4px 'Liberation Sans',sans-serif;line-height:19px;color:#000;transform:scaleX(1.0076);">Hydrogen(H)</span>
<span class="t" style="left:529.6px;top:233.9px;font:normal normal 14.4px 'Liberation Sans',sans-serif;line-height:19px;color:#000;transform:scaleX(0.9498);">7.7</span>
<span class="t" style="left:683.0px;top:233.9px;font:normal normal 14.4px 'Liberation Sans',sans-serif;line-height:19px;color:#000;">1</span>
<span class="t" style="left:837.2px;top:233.9px;font:normal normal 14.4px 'Liberation Sans',sans-serif;line-height:19px;color:#000;transform:scaleX(1.0262);">7.7/1=7.7</span>
<span class="t" style="left:375.4px;top:357.3px;font:normal normal 16px 'Liberation Serif',serif;line-height:21px;color:#000;transform:scaleX(0.9926);"><b>E</b>lements</span>
<span class="t" style="left:529.6px;top:357.3px;font:normal normal 16px 'Liberation Serif',serif;line-height:21px;color:#000;transform:scaleX(0.9790);">% of elements</span>
<span class="t" style="left:683.0px;top:357.3px;font:normal normal 16px 'Liberation Serif',serif;line-height:21px;color:#000;transform:scaleX(0.9902);">Atomic weight</span>
<span class="t" style="left:837.2px;top:357.3px;font:normal normal 16px 'Liberation Serif',serif;line-height:21px;color:#000;transform:scaleX(0.9765);">Atomic ratio</span>
<span class="t" style="left:375.4px;top:376.3px;font:normal normal 16px 'Liberation Serif',serif;line-height:21px;color:#000;transform:scaleX(0.9848);">Phosphorus(P)</span>
<span class="t" style="left:529.6px;top:376.3px;font:normal normal 16px 'Liberation Serif',serif;line-height:21px;color:#000;transform:scaleX(0.9786);">56.4</span>
<span class="t" style="left:683.0px;top:376.3px;font:normal normal 16px 'Liberation Serif',serif;line-height:21px;color:#000;transform:scaleX(0.9625);">31</span>
<span class="t" style="left:837.2px;top:376.3px;font:normal normal 16px 'Liberation Serif',serif;line-height:21px;color:#000;transform:scaleX(0.9939);">56.4/31=1.8</span>
<span class="t" style="left:375.4px;top:395.3px;font:normal normal 16px 'Liberation Serif',serif;line-height:21px;color:#000;transform:scaleX(1.0018);">Oxygen(O)</span>
<span class="t" style="left:529.6px;top:395.3px;font:normal normal 16px 'Liberation Serif',serif;line-height:21px;color:#000;transform:scaleX(0.9786);">43.7</span>
<span class="t" style="left:683.0px;top:395.3px;font:normal normal 16px 'Liberation Serif',serif;line-height:21px;color:#000;transform:scaleX(0.9625);">16</span>
<span class="t" style="left:837.2px;top:395.3px;font:normal normal 16px 'Liberation Serif',serif;line-height:21px;color:#000;transform:scaleX(0.9939);">43.7/16=2.7</span>
<span class="t" style="left:375.4px;top:526.1px;font:normal normal 13.2px 'Liberation Sans',sans-serif;line-height:17px;color:#000;transform:scaleX(1.0418);word-spacing:-2.4px;">Element</span>
<span class="t" style="left:683.0px;top:526.1px;font:normal normal 13.2px 'Liberation Sans',sans-serif;line-height:17px;color:#000;transform:scaleX(1.0868);word-spacing:-2.4px;">Atomic weight</span>
<span class="t" style="left:837.2px;top:526.1px;font:normal normal 13.2px 'Liberation Sans',sans-serif;line-height:17px;color:#000;transform:scaleX(1.0741);word-spacing:-2.4px;">Atomic ratio</span>
<span class="t" style="left:529.6px;top:526.1px;font:normal normal 13.2px 'Liberation Sans',sans-serif;line-height:17px;color:#000;transform:scaleX(1.0500);word-spacing:-1.4px;">% of elements</span>
<span class="t" style="left:375.4px;top:545.1px;font:normal normal 13.2px 'Liberation Sans',sans-serif;line-height:17px;color:#000;transform:scaleX(0.9812);">Carbon(C)</span>
<span class="t" style="left:529.6px;top:545.1px;font:normal normal 13.2px 'Liberation Sans',sans-serif;line-height:17px;color:#000;transform:scaleX(0.9506);">54.5</span>
<span class="t" style="left:683.0px;top:545.1px;font:normal normal 13.2px 'Liberation Sans',sans-serif;line-height:17px;color:#000;transform:scaleX(0.9544);">12</span>
<span class="t" style="left:837.2px;top:545.1px;font:normal normal 13.2px 'Liberation Sans',sans-serif;line-height:17px;color:#000;transform:scaleX(1.0004);">54.5/12=4.53</span>
<span class="t" style="left:375.4px;top:563.5px;font:normal normal 13.2px 'Liberation Sans',sans-serif;line-height:17px;color:#000;transform:scaleX(1.0253);">Hydrogen(H)</span>
<span class="t" style="left:529.6px;top:563.5px;font:normal normal 13.2px 'Liberation Sans',sans-serif;line-height:17px;color:#000;transform:scaleX(0.9491);">9.1</span>
<span class="t" style="left:683.0px;top:563.5px;font:normal normal 13.2px 'Liberation Sans',sans-serif;line-height:17px;color:#000;">1</span>
<span class="t" style="left:837.2px;top:563.5px;font:normal normal 13.2px 'Liberation Sans',sans-serif;line-height:17px;color:#000;transform:scaleX(1.0187);">9.1/1=9.1</span>
<span class="t" style="left:375.4px;top:582.1px;font:normal normal 13.2px 'Liberation Sans',sans-serif;line-height:17px;color:#000;transform:scaleX(1.0172);">Oxygen(O)</span>
<span class="t" style="left:529.6px;top:582.1px;font:normal normal 13.2px 'Liberation Sans',sans-serif;line-height:17px;color:#000;transform:scaleX(0.9506);">36.4</span>
<span class="t" style="left:683.0px;top:582.1px;font:normal normal 13.2px 'Liberation Sans',sans-serif;line-height:17px;color:#000;transform:scaleX(0.9544);">16</span>
<span class="t" style="left:837.2px;top:582.1px;font:normal normal 13.2px 'Liberation Sans',sans-serif;line-height:17px;color:#000;transform:scaleX(1.0004);">36.4/16=2.27</span>
<svg style="left:354.5px;top:512.5px" width="12" height="13" viewBox="0 0 12 13"><rect x=".5" y=".5" width="10.5" height="11.5" fill="#fff" stroke="#7f9cc8"/><path d="M5.8 2 V10.4 M1.8 6.2 H9.8" stroke="#3b5fa8" stroke-width="1"/><path d="M4.4 3.4 L5.8 1.8 L7.2 3.4 M4.4 9 L5.8 10.6 L7.2 9 M3.2 4.8 L1.6 6.2 L3.2 7.6 M8.4 4.8 L10 6.2 L8.4 7.6" fill="none" stroke="#3b5fa8" stroke-width=".9"/></svg>
<div style="left:983px;top:600.5px;width:6px;height:6px;background:#fff;border:1px solid #777"></div>
<div style="left:1349px;top:146px;width:17px;height:561px;background:#a9c5ee"></div>
<div style="left:1354px;top:148px;width:9px;height:2px;background:#1b3f75"></div>
<svg style="left:1351px;top:152px" width="15" height="14" viewBox="0 0 15 14"><rect x="1" y="1" width="8" height="7" fill="#f4f6fa" stroke="#333" stroke-width=".9"/><rect x="5.4" y="5.2" width="8" height="7" fill="#f4f6fa" stroke="#333" stroke-width=".9"/><path d="M3 5 L7 9 M7 9 V6.4 M7 9 H4.4 M11.4 7 L8.4 4 M8.4 4 V6 M8.4 4 H10.4" stroke="#333" stroke-width=".8" fill="none"/></svg>
<div style="left:1349px;top:167px;width:17px;height:488px;background:linear-gradient(90deg,#7494cb,#84a2d6 30%,#7b9ad0);border-left:1px solid #9db9e4"></div>
<svg style="left:1353px;top:174px" width="10" height="6" viewBox="0 0 10 6"><path d="M0 5 L4.6 0 L9.2 5 Z" fill="#4a6796"/></svg>
<svg style="left:1353px;top:643px" width="10" height="6" viewBox="0 0 10 6"><path d="M0 0 H9.2 L4.6 5 Z" fill="#4a6796"/></svg>
<div style="left:1350.5px;top:226.5px;width:15px;height:215px;background:linear-gradient(90deg,#f4f6fa,#dfe5ef 55%,#c9d2e2);border:1px solid #8fa4c6;border-radius:2px"></div>
<svg style="left:1354px;top:329px" width="9" height="8" viewBox="0 0 9 8"><path d="M0 .6 H8 M0 2.6 H8 M0 4.6 H8 M0 6.6 H8" stroke="#6c7f9e" stroke-width=".9"/></svg>
<div style="left:1349px;top:655px;width:17px;height:52px;background:#b5cdf1"></div>
<svg style="left:1353px;top:659px" width="9" height="9" viewBox="0 0 9 9"><path d="M.6 4 L4 .4 L7.4 4 Z M.6 8 L4 4.4 L7.4 8 Z" fill="#1a1a2a"/></svg>
<svg style="left:1352.5px;top:675px" width="9" height="9" viewBox="0 0 9 9"><circle cx="4" cy="4.2" r="3.2" fill="#c9ccd4" stroke="#222" stroke-width="1"/></svg>
<svg style="left:1353px;top:692.5px" width="9" height="9" viewBox="0 0 9 9"><path d="M.6 .4 H7.4 L4 4 Z M.6 4.4 H7.4 L4 8 Z" fill="#1a1a2a"/></svg>
<!-- status bar -->
<div style="left:0px;top:706.5px;width:1366px;height:21.5px;background:linear-gradient(#d9e7fb 0,#cfe0fa 20%,#c4d9f9 45%,#bcd3f6 55%,#c8dcf8 80%,#d4e4fa 100%);border-top:1px solid #e4eefc"></div>
<div style="left:1084.5px;top:707.5px;width:281.5px;height:20.5px;background:linear-gradient(#bcd2f3 0,#abc5ee 30%,#9dbae8 55%,#a6c1ec 86%,#92b0dc 100%);border-left:1px solid #8aabdc"></div>
<div style="left:76px;top:708.5px;width:2px;height:18.5px;background:linear-gradient(90deg,#9fbbe2 50%,#eef4fd 50%)"></div>
<div style="left:146.5px;top:708.5px;width:2px;height:18.5px;background:linear-gradient(90deg,#9fbbe2 50%,#eef4fd 50%)"></div>
<div style="left:269.5px;top:708.5px;width:2px;height:18.5px;background:linear-gradient(90deg,#9fbbe2 50%,#eef4fd 50%)"></div>
<span class="t" style="left:8.4px;top:709.9px;font:normal normal 11px 'Liberation Sans',sans-serif;line-height:14px;color:#1a3f80;transform:scaleX(0.9945);">Page: 1 of 1</span>
<span class="t" style="left:86.4px;top:709.9px;font:normal normal 11px 'Liberation Sans',sans-serif;line-height:14px;color:#1a3f80;transform:scaleX(1.0415);">Words: 50</span>
<span class="t" style="left:188.4px;top:709.9px;font:normal normal 11px 'Liberation Sans',sans-serif;line-height:14px;color:#1a3f80;transform:scaleX(1.0325);">English (India)</span>
<svg style="left:155px;top:709px" width="18" height="15" viewBox="0 0 18 15"><path d="M1 8.4 L5.4 6 L11 8 L14.4 6.4 L15.4 10 L9 13.4 L1.4 11.4 Z" fill="#f3f5f9" stroke="#7b8aa8" stroke-width=".8"/><path d="M5.4 6 L8.4 10.6 L11 8" fill="none" stroke="#7b8aa8" stroke-width=".7"/><path d="M7.4 5.4 L9.6 8 L15.6 .8" fill="none" stroke="#2d56a8" stroke-width="1.6"/></svg>
<div style="left:1090.5px;top:708.5px;width:91.5px;height:17.5px;background:linear-gradient(#cfdff6,#b9cff0 50%,#b0c8ec 55%,#c3d6f3);border:1px solid #98b5e0;border-radius:2px"></div>
<div style="left:1091px;top:709px;width:18px;height:16.5px;background:linear-gradient(#fbdc9a,#fbc566 50%,#f9b344 55%,#fbd78c);border:1px solid #d99b3a;border-radius:2px"></div>
<div style="left:1109.5px;top:709.5px;width:1px;height:15.5px;background:#a3bde2"></div>
<div style="left:1127.5px;top:709.5px;width:1px;height:15.5px;background:#a3bde2"></div>
<div style="left:1146px;top:709.5px;width:1px;height:15.5px;background:#a3bde2"></div>
<div style="left:1164px;top:709.5px;width:1px;height:15.5px;background:#a3bde2"></div>
<svg style="left:1094.5px;top:711px" width="12" height="13" viewBox="0 0 12 13"><rect x=".6" y=".6" width="10" height="11" fill="#fdfdfd" stroke="#555" stroke-width=".9"/><path d="M2.4 3.4 H8.8 M2.4 5.6 H8.8 M2.4 7.8 H8.8 M2.4 10 H8.8" stroke="#666" stroke-width=".8"/></svg>
<svg style="left:1112px;top:711px" width="13" height="12" viewBox="0 0 13 12"><path d="M6.2 2 C4.6 .8 2.4 .8 .6 1.6 V10 C2.4 9.2 4.6 9.2 6.2 10.4 C7.8 9.2 10 9.2 11.8 10 V1.6 C10 .8 7.8 .8 6.2 2 Z M6.2 2 V10.4" fill="#fbfbf4" stroke="#555" stroke-width=".8"/><path d="M2 3.6 H5 M2 5.4 H5 M2 7.2 H5 M7.6 3.6 H10.6 M7.6 5.4 H10.6 M7.6 7.2 H10.6" stroke="#777" stroke-width=".6"/></svg>
<svg style="left:1130px;top:711px" width="14" height="13" viewBox="0 0 14 13"><rect x=".6" y=".6" width="9.6" height="8.6" fill="#fdfdfd" stroke="#555" stroke-width=".9"/><path d="M2.2 3 H8.6 M2.2 5 H8.6 M2.2 7 H6" stroke="#777" stroke-width=".7"/><circle cx="9.6" cy="9" r="3" fill="#3f9c6a" stroke="#2b6ea8" stroke-width=".7"/></svg>
<svg style="left:1149px;top:712px" width="13" height="11" viewBox="0 0 13 11"><path d="M.6 1 H11 M3 3.4 H11 M5 5.8 H11 M3 8.2 H11 M.6 10.4 H11" stroke="#556" stroke-width=".9"/></svg>
<svg style="left:1167px;top:712px" width="13" height="11" viewBox="0 0 13 11"><path d="M.6 1 H11.4 M.6 3.4 H11.4 M.6 5.8 H11.4 M.6 8.2 H11.4 M.6 10.4 H11.4" stroke="#445" stroke-width="1"/></svg>
<span class="t" style="left:1191.6px;top:709.9px;font:normal normal 11px 'Liberation Sans',sans-serif;line-height:14px;color:#1a3f80;transform:scaleX(0.9384);">100%</span>
<svg style="left:1226.5px;top:708.8px" width="17" height="17" viewBox="0 0 17 17"><circle cx="8.5" cy="8.5" r="7.6" fill="#e9eff9" stroke="#5b7197" stroke-width="1"/><circle cx="8.5" cy="8.5" r="6.3" fill="none" stroke="#fff" stroke-width="1"/><path d="M4.4 8.5 H12.6" stroke="#3d4f6e" stroke-width="1.8"/></svg>
<svg style="left:1344.1px;top:708.8px" width="17" height="17" viewBox="0 0 17 17"><circle cx="8.5" cy="8.5" r="7.6" fill="#e9eff9" stroke="#5b7197" stroke-width="1"/><circle cx="8.5" cy="8.5" r="6.3" fill="none" stroke="#fff" stroke-width="1"/><path d="M4.4 8.5 H12.6 M8.5 4.4 V12.6" stroke="#3d4f6e" stroke-width="1.8"/></svg>
<div style="left:1244px;top:716.5px;width:100px;height:2px;background:linear-gradient(#6f8fc0 50%,#dfe9f9 50%)"></div>
<svg style="left:1288.5px;top:709.5px" width="10" height="15" viewBox="0 0 10 15"><path d="M.6 .6 H8.4 V9.6 L4.5 13.6 L.6 9.6 Z" fill="#e6edf8" stroke="#5b7197" stroke-width="1"/><path d="M4.5 3 V9" stroke="#8aa0c4" stroke-width=".8"/></svg>
<!-- taskbar -->
<div style="left:0px;top:728px;width:1366px;height:40px;background:linear-gradient(90deg,#29a8b6 0,#2caab0 8%,#36b2a8 17%,#3eb8a2 26%,#40b8a2 31%,#3f9cb4 35.3%,#3d8cc6 35.6%,#3f92c4 50%,#4a9dc6 70%,#4796c8 84%)"></div>
<svg style="left:0px;top:728px" width="1366" height="40" viewBox="0 0 1366 40"><path d="M1149 0 L1366 0 V40 H1186 Z" fill="#4364c6"/><path d="M917 40 L1020 0 H1046 L992 40 Z" fill="#3a78c2" opacity=".6"/><path d="M621 0 C630 16 640 30 650 40 M796 0 C800 14 808 30 816 40 M952 0 C950 10 951 18 954 22 C962 30 974 36 985 40" fill="none" stroke="#2b6aa6" stroke-width="1.1" opacity=".6"/><path d="M228 40 L250 0 M240 20 L254 2" fill="none" stroke="#8fe0cf" stroke-width="1" opacity=".45"/></svg>
<svg style="left:11px;top:734px" width="28" height="27" viewBox="0 0 28 27"><path d="M0 4 L11.6 2.2 V12.6 H0 Z M13.2 2 L27.6 0 V12.6 H13.2 Z M0 14.2 H11.6 V24.6 L0 22.8 Z M13.2 14.2 H27.6 V27 L13.2 24.8 Z" fill="#fff"/></svg>
<svg style="left:62px;top:730px" width="40" height="36" viewBox="0 0 40 36"><defs><linearGradient id="ie" x1="0" y1="0" x2="1" y2="1"><stop offset="0" stop-color="#9fe4fb"/><stop offset=".5" stop-color="#5cc4f2"/><stop offset="1" stop-color="#2a8fd6"/></linearGradient></defs><path d="M31 19 A10 10 0 1 0 28.6 25.2" fill="none" stroke="#1f7fc0" stroke-width="6.6"/><path d="M10.5 19.4 H33.4" stroke="#1f7fc0" stroke-width="4.6"/><path d="M31 19 A10 10 0 1 0 28.6 25.2" fill="none" stroke="url(#ie)" stroke-width="5.2"/><path d="M10.5 19.4 H32.8" stroke="#7fd6f8" stroke-width="3.4"/><path d="M5.4 31.6 C-0.6 22 12 2.4 32 3.2 C36 3.6 34.4 8 33.4 9.4" fill="none" stroke="#f1c31c" stroke-width="2.8" stroke-linecap="round"/><path d="M5.6 30.6 C1 22 13 4 31.6 4" fill="none" stroke="#fbe36a" stroke-width="1" stroke-linecap="round"/></svg>
<div style="left:114.5px;top:730px;width:58px;height:38px;background:rgba(255,255,255,.16);border:1px solid rgba(255,255,255,.26);"></div>
<div style="left:176px;top:730px;width:58px;height:38px;background:rgba(255,255,255,.16);border:1px solid rgba(255,255,255,.26);"></div>
<svg style="left:126px;top:731px" width="36" height="36" viewBox="0 0 36 36"><g transform="translate(17 17) scale(1.0)"><circle r="15" fill="#dc4437"/><path d="M0 0 L-13 -7.5 A15 15 0 0 0 -2.2 14.84 L6.5 3.75 Z" fill="#1a9c56" transform="rotate(0)"/><path d="M-13 -7.5 A15 15 0 0 0 -1.6 14.9 L5.6 2.6 L-6 -3.4 Z" fill="#1a9c56"/><path d="M15 0 A15 15 0 0 1 -1.6 14.9 L5.8 3.4 L6.6 -3.4 L13.4 -6.6 A15 15 0 0 1 15 0Z" fill="#fcc31c"/><path d="M13.6 -6.4 H0 L5.8 3.4 L-1.6 14.9 A15 15 0 0 0 13.6 -6.4 Z" fill="#fcc31c"/><circle r="6.9" fill="#f4f4f4"/><circle r="5.4" fill="#4a8af4"/></g><circle cx="22" cy="24.6" r="7" fill="#6a4a36"/><circle cx="21" cy="21.4" r="3.4" fill="#e9c9a8"/><circle cx="28" cy="28" r="4.6" fill="#3a2c26"/><circle cx="28" cy="26" r="2.4" fill="#f0d6bc"/></svg>
<svg style="left:189px;top:734px" width="32" height="30" viewBox="0 0 32 30"><path d="M1 6 H29 V22 H1 Z" fill="#f4d675" stroke="#d6a83a" stroke-width=".8"/><path d="M2.4 3 H10 L11.6 5 H27.6 V8 H2.4 Z" fill="#f8e08e" stroke="#d6a83a" stroke-width=".7"/><rect x="9" y="1.6" width="2.6" height="1.8" fill="#d6423a"/><rect x="18" y="4.4" width="2.6" height="1.6" fill="#4a7fd0"/><rect x="11" y="3" width="2.4" height="1.4" fill="#4aa04a"/><path d="M1 11 H29 V22 H1 Z" fill="#f7de83"/><path d="M4.6 16 H25.4 V29 H20.6 V22.6 H9.4 V29 H4.6 Z" fill="#62a8e2" stroke="#3f82c0" stroke-width=".8"/><rect x="6" y="14.4" width="18" height="2.6" fill="#9fd0f4"/></svg>
<svg style="left:251px;top:733px" width="31" height="31" viewBox="0 0 31 31"><rect width="31" height="30.4" fill="#0e9a1c"/><path d="M5.4 9.4 H25.6 L23.6 24.6 H7.4 Z" fill="#fff"/><path d="M10.6 9.4 C10.6 3 20.4 3 20.4 9.4" fill="none" stroke="#fff" stroke-width="1.6"/><path d="M10.4 13.6 L14.8 13 V16.6 H10.4 Z M15.6 12.9 L20.8 12.2 V16.6 H15.6 Z M10.4 17.4 H14.8 V21 L10.4 20.4 Z M15.6 17.4 H20.8 V21.8 L15.6 21.1 Z" fill="#0e9a1c"/></svg>
<svg style="left:313px;top:732px" width="32" height="32" viewBox="0 0 32 32"><g transform="translate(16 16) scale(1.0)"><circle r="15" fill="#dc4437"/><path d="M0 0 L-13 -7.5 A15 15 0 0 0 -2.2 14.84 L6.5 3.75 Z" fill="#1a9c56" transform="rotate(0)"/><path d="M-13 -7.5 A15 15 0 0 0 -1.6 14.9 L5.6 2.6 L-6 -3.4 Z" fill="#1a9c56"/><path d="M15 0 A15 15 0 0 1 -1.6 14.9 L5.8 3.4 L6.6 -3.4 L13.4 -6.6 A15 15 0 0 1 15 0Z" fill="#fcc31c"/><path d="M13.6 -6.4 H0 L5.8 3.4 L-1.6 14.9 A15 15 0 0 0 13.6 -6.4 Z" fill="#fcc31c"/><circle r="6.9" fill="#f4f4f4"/><circle r="5.4" fill="#4a8af4"/></g></svg>
<svg style="left:373px;top:731px" width="38" height="37" viewBox="0 0 38 37"><ellipse cx="10.6" cy="18.6" rx="9.4" ry="5.6" fill="#cfe0dc" opacity=".75"/><ellipse cx="15" cy="9.4" rx="11.4" ry="8.4" fill="#fbeef0" stroke="#d64a50" stroke-width="2" transform="rotate(-8 15 9.4)"/><path d="M11.6 5 L19.4 19 M20.4 5.4 L16.4 17.6" stroke="#5f6f80" stroke-width="1.8" stroke-linecap="round"/><path d="M11.6 5 L18.6 17.6" stroke="#d9dfe6" stroke-width=".7"/><ellipse cx="21.4" cy="26.4" rx="2.6" ry="5" fill="none" stroke="#2788ac" stroke-width="2.4" transform="rotate(-24 21.4 26.4)"/><ellipse cx="27.6" cy="22.6" rx="2.6" ry="5" fill="none" stroke="#2788ac" stroke-width="2.4" transform="rotate(-58 27.6 22.6)"/><circle cx="19" cy="18.4" r="1.2" fill="#e8eef2"/></svg>
<div style="left:423.5px;top:728.8px;width:59px;height:39.2px;background:linear-gradient(115deg,rgba(255,255,255,.62),rgba(255,255,255,.42) 55%,rgba(225,225,250,.5));border:1.5px solid rgba(255,255,255,.78);border-bottom:none"></div>
<svg style="left:436px;top:731px" width="34" height="36" viewBox="0 0 34 36"><defs><linearGradient id="wb" x1="0" y1="0" x2="1" y2="1"><stop offset="0" stop-color="#6f93d4"/><stop offset=".5" stop-color="#2f55a4"/><stop offset="1" stop-color="#1f3f88"/></linearGradient></defs><path d="M2.4 8.4 C3.4 3.6 7 1.4 13 1.4 H26.8 V27.4 H2.4 Z" fill="url(#wb)" stroke="#dfe8f6" stroke-width="1"/><path d="M9.4 6.4 L31.2 7.4 L30 31 L7.6 29.4 Z" fill="#f8fafd" stroke="#c3cde0" stroke-width=".7"/><text x="11.4" y="17.6" font-family="Liberation Sans,sans-serif" font-size="12.5" font-weight="bold" font-style="italic" fill="#2a4694">W</text><path d="M24.4 10.6 H29.4 M24.2 13.6 H29.2 M24 16.6 H29 M10.6 20.4 H28.8 M10.4 23.4 H28.6 M10.2 26.4 H28.4" stroke="#24408c" stroke-width="1.6"/></svg>
<svg style="left:1122px;top:739px" width="19" height="17" viewBox="0 0 19 17"><path d="M3.6 11.6 C.6 11.6 .2 7.6 3.2 7 C3 3.6 7.4 2.4 9 5 C11.6 3.2 14.8 5.4 13.8 8 C16.6 8 16.6 11.6 14 11.6 Z" fill="#eef2f8" stroke="#9aa7bd" stroke-width=".5"/><circle cx="13" cy="11.6" r="4.6" fill="#2a5fc4"/><path d="M10.6 11 C11 9.2 13.6 8.6 15 10 M15.4 12.2 C15 14 12.4 14.6 11 13.2" fill="none" stroke="#fff" stroke-width="1"/><path d="M15.6 8.8 L15.2 10.6 L13.6 9.8 Z M10.4 14.4 L10.8 12.6 L12.4 13.4 Z" fill="#fff"/></svg>
<svg style="left:1146.5px;top:738px" width="17" height="19" viewBox="0 0 17 19"><path d="M1.6 .6 V18" stroke="#fff" stroke-width="1.6"/><path d="M2.4 1.6 C6 0 8.4 3.4 14.6 1.6 C13.4 4.6 13.6 6.4 14.6 9 C9.4 10.6 6.6 7.4 2.4 9.4 Z" fill="#fff"/></svg>
<svg style="left:1171px;top:738px" width="17" height="19" viewBox="0 0 17 19"><path d="M2 .6 V4.6 M6 .6 V4.6" stroke="#fff" stroke-width="1.4"/><path d="M.4 4.6 H7.6 V8.6 C7.6 10.4 6 11 4.8 11 V17.6 H3.2 V11 C2 11 .4 10.4 .4 8.6 Z" fill="#fff"/><rect x="9.2" y="3.4" width="6.2" height="14.2" rx=".8" fill="none" stroke="#fff" stroke-width="1.5"/><rect x="10.8" y="1.6" width="3" height="1.8" fill="#fff"/></svg>
<svg style="left:1195px;top:740px" width="18" height="17" viewBox="0 0 18 17"><rect x="0" y="11.6" width="2.4" height="3.4" fill="#fff"/><rect x="3.8" y="8.8" width="2.4" height="6.2" fill="#fff"/><rect x="7.6" y="5.6" width="2.4" height="9.4" fill="#e3e8f2" opacity=".7"/><rect x="11.4" y="2" width="2.4" height="13" fill="#e3e8f2" opacity=".55"/><path d="M10.6 6.6 L15.6 15.6 H5.6 Z" fill="#f6c313" stroke="#b08a10" stroke-width=".5"/><path d="M10.6 9.6 V12.6 M10.6 13.6 V14.6" stroke="#222" stroke-width="1.1"/></svg>
<svg style="left:1219px;top:739px" width="17" height="18" viewBox="0 0 17 18"><path d="M.6 6 H3.6 L8 1.6 V16 L3.6 11.6 H.6 Z" fill="#fff"/><path d="M10 6 C11.4 7.6 11.4 10 10 11.6 M12.2 4 C14.6 6.6 14.6 11 12.2 13.6" fill="none" stroke="#fff" stroke-width="1.2"/></svg>
<span class="t" style="left:1249.3px;top:740.7px;font:normal normal 12.4px 'Liberation Sans',sans-serif;line-height:16px;color:#fff;transform:scaleX(0.8380);">ENG</span>
<span class="t" style="left:1305.0px;top:731.9px;font:normal normal 12.4px 'Liberation Sans',sans-serif;line-height:16px;color:#fff;transform:scaleX(0.8772);">04:44</span>
<span class="t" style="left:1289.4px;top:749.1px;font:normal normal 12.4px 'Liberation Sans',sans-serif;line-height:16px;color:#fff;transform:scaleX(0.9088);">30-03-2020</span>
</body></html>
